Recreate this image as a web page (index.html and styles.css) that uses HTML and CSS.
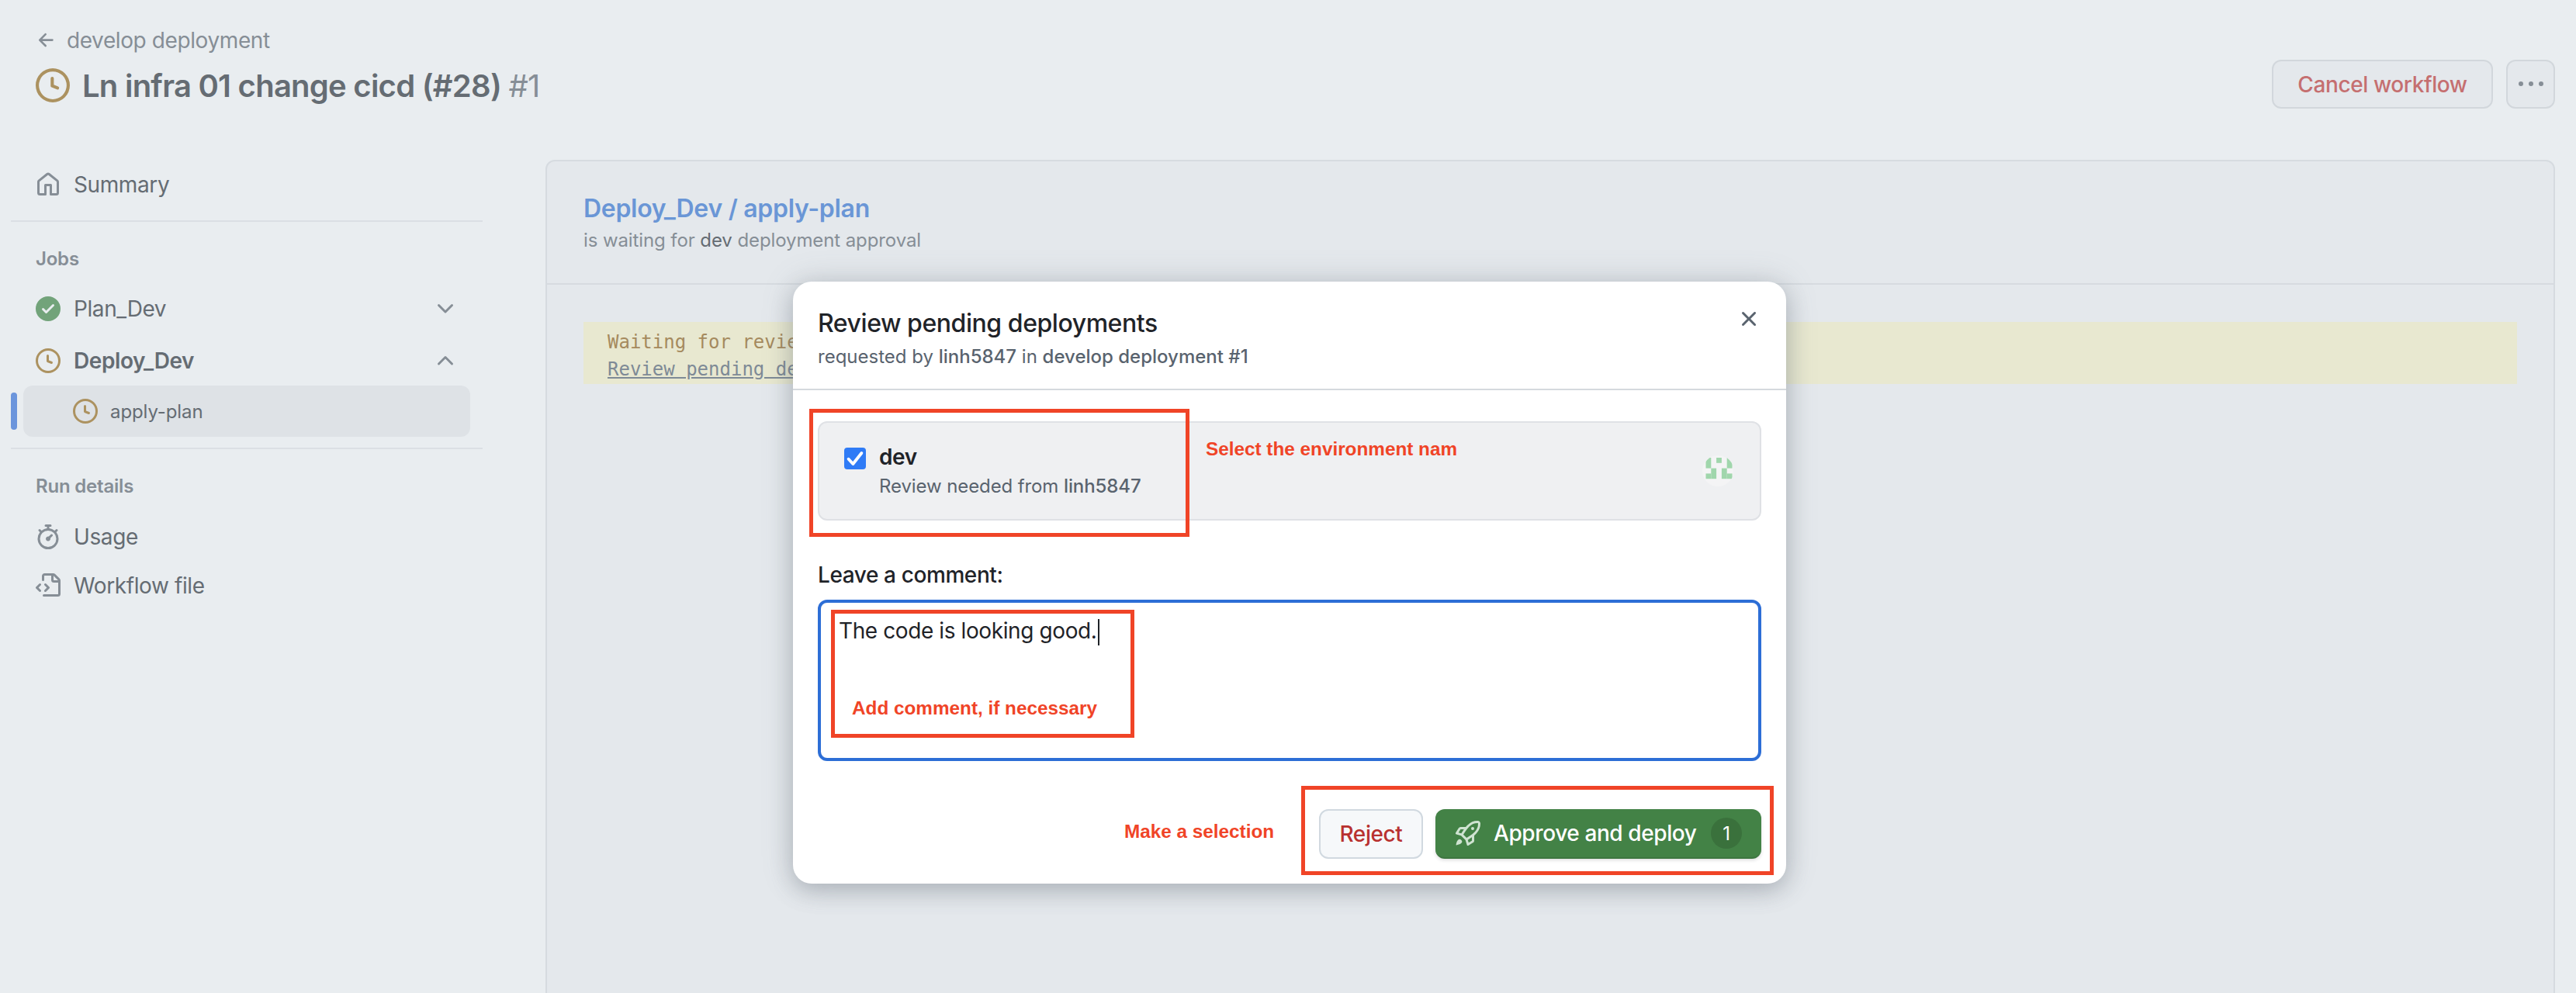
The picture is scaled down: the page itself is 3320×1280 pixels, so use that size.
FILE: index.html
```html
<!DOCTYPE html>
<html lang="en">
<head>
  <meta charset="UTF-8" />
  <title>Review pending deployments</title>
  <link rel="stylesheet" href="styles.css">
</head>
<body>
  <svg class="sprites" xmlns="http://www.w3.org/2000/svg">
    <symbol id="i-clock" viewBox="0 0 16 16"><path d="M8 0a8 8 0 1 1 0 16A8 8 0 0 1 8 0ZM1.5 8a6.5 6.5 0 1 0 13 0 6.5 6.5 0 0 0-13 0Zm7-3.25v2.992l2.028.812a.75.75 0 0 1-.557 1.392l-2.5-1A.751.751 0 0 1 7 8.25v-3.5a.75.75 0 0 1 1.5 0Z"/></symbol>
  </svg>

  <header class="top">
    <div>
      <a class="back">
        <svg class="icon-back" viewBox="0 0 16 16"><path d="M7.78 12.53a.75.75 0 0 1-1.06 0L2.47 8.28a.75.75 0 0 1 0-1.06l4.25-4.25a.751.751 0 0 1 1.042.018.751.751 0 0 1 .018 1.042L4.81 7h7.44a.75.75 0 0 1 0 1.5H4.81l2.97 2.97a.75.75 0 0 1 0 1.06Z"/></svg>
        develop deployment
      </a>
      <h1 class="title">
        <svg class="icon-title"><use href="#i-clock"/></svg>
        <span>Ln infra 01 change cicd (#28) <span class="run-no">#1</span></span>
      </h1>
    </div>
    <div class="top-actions">
      <button class="btn-cancel">Cancel workflow</button>
      <button class="btn-more">
        <svg viewBox="0 0 16 16"><path d="M8 9a1.5 1.5 0 1 0 0-3 1.5 1.5 0 0 0 0 3ZM1.5 9a1.5 1.5 0 1 0 0-3 1.5 1.5 0 0 0 0 3Zm13 0a1.5 1.5 0 1 0 0-3 1.5 1.5 0 0 0 0 3Z"/></svg>
      </button>
    </div>
  </header>

  <main class="layout">
    <nav class="side">
      <a class="side-item">
        <svg class="icon-nav" viewBox="0 0 16 16"><path d="M6.906.664a1.749 1.749 0 0 1 2.187 0l5.25 4.2c.415.332.657.835.657 1.367v7.019A1.75 1.75 0 0 1 13.25 15h-3.5a.75.75 0 0 1-.75-.75V9H7v5.25a.75.75 0 0 1-.75.75h-3.5A1.75 1.75 0 0 1 1 13.25V6.23c0-.531.242-1.034.657-1.366l5.25-4.2Zm1.25 1.171a.25.25 0 0 0-.312 0l-5.25 4.2a.25.25 0 0 0-.094.196v7.019c0 .138.112.25.25.25H5.5V8.25a.75.75 0 0 1 .75-.75h3.5a.75.75 0 0 1 .75.75v5.25h2.75a.25.25 0 0 0 .25-.25V6.23a.25.25 0 0 0-.094-.195Z"/></svg>
        Summary
      </a>
      <hr class="side-rule">
      <div class="side-head">Jobs</div>
      <a class="side-item job">
        <svg class="icon-nav icon-ok" viewBox="0 0 16 16"><path d="M8 16A8 8 0 1 1 8 0a8 8 0 0 1 0 16Zm3.78-9.72a.751.751 0 0 0-.018-1.042.751.751 0 0 0-1.042-.018L6.75 9.19 5.28 7.72a.751.751 0 0 0-1.042.018.751.751 0 0 0-.018 1.042l2 2a.75.75 0 0 0 1.06 0Z"/></svg>
        <span class="grow">Plan_Dev</span>
        <svg class="icon-chev" viewBox="0 0 16 16"><path d="M12.78 5.22a.749.749 0 0 1 0 1.06l-4.25 4.25a.749.749 0 0 1-1.06 0L3.22 6.28a.749.749 0 1 1 1.06-1.06L8 8.939l3.72-3.719a.749.749 0 0 1 1.06 0Z"/></svg>
      </a>
      <a class="side-item job job-open">
        <svg class="icon-nav icon-wait"><use href="#i-clock"/></svg>
        <span class="grow">Deploy_Dev</span>
        <svg class="icon-chev" viewBox="0 0 16 16"><path d="M3.22 10.53a.749.749 0 0 1 0-1.06l4.25-4.25a.749.749 0 0 1 1.06 0l4.25 4.25a.749.749 0 0 1-1.06 1.06L8 6.811 4.28 10.53a.749.749 0 0 1-1.06 0Z"/></svg>
      </a>
      <div class="step-row">
        <span class="step-bar"></span>
        <a class="step">
          <svg class="icon-nav icon-wait"><use href="#i-clock"/></svg>
          apply-plan
        </a>
      </div>
      <hr class="side-rule side-rule-2">
      <div class="side-head">Run details</div>
      <a class="side-item usage">
        <svg class="icon-nav" viewBox="0 0 16 16"><path d="M5.75.75A.75.75 0 0 1 6.5 0h3a.75.75 0 0 1 0 1.5h-.75v1l-.001.041a6.724 6.724 0 0 1 3.464 1.435l.007-.006.75-.75a.751.751 0 0 1 1.042.018.751.751 0 0 1 .018 1.042l-.75.75-.006.007a6.75 6.75 0 1 1-10.548 0L2.72 5.03l-.75-.75a.751.751 0 0 1 .018-1.042.751.751 0 0 1 1.042-.018l.75.75.007.006A6.72 6.72 0 0 1 7.25 2.541V1.5H6.5a.75.75 0 0 1-.75-.75ZM8 14.5a5.25 5.25 0 1 0-.001-10.501A5.25 5.25 0 0 0 8 14.5Zm.389-6.7 1.33-1.33a.75.75 0 1 1 1.061 1.06L9.45 8.861A1.503 1.503 0 0 1 8 10.75a1.499 1.499 0 1 1 .389-2.95Z"/></svg>
        Usage
      </a>
      <a class="side-item">
        <svg class="icon-nav" viewBox="0 0 16 16"><path d="M4 1.75C4 .784 4.784 0 5.75 0h5.586c.464 0 .909.184 1.237.513l2.914 2.914c.329.328.513.773.513 1.237v8.586A1.75 1.75 0 0 1 14.25 15h-9a.75.75 0 0 1 0-1.5h9a.25.25 0 0 0 .25-.25V6h-2.75A1.75 1.75 0 0 1 10 4.25V1.5H5.75a.25.25 0 0 0-.25.25v2.5a.75.75 0 0 1-1.5 0Zm1.72 4.97a.75.75 0 0 1 1.06 0l2 2a.75.75 0 0 1 0 1.06l-2 2a.749.749 0 0 1-1.275-.326.749.749 0 0 1 .215-.734l1.47-1.47-1.47-1.47a.75.75 0 0 1 0-1.06ZM3.28 7.78 1.81 9.25l1.47 1.47a.751.751 0 0 1-.018 1.042.751.751 0 0 1-1.042.018l-2-2a.75.75 0 0 1 0-1.06l2-2a.751.751 0 0 1 1.042.018.751.751 0 0 1 .018 1.042Zm8.22-6.218V4.25c0 .138.112.25.25.25h2.688l-.011-.013-2.914-2.914-.013-.011Z"/></svg>
        Workflow file
      </a>
    </nav>

    <section class="panel">
      <div class="panel-head">
        <h2 class="panel-title">Deploy_Dev / apply-plan</h2>
        <p class="panel-sub">is waiting for <span class="panel-env">dev</span> deployment approval</p>
      </div>
      <div class="panel-body">
        <div class="notice">
          <div>Waiting for revie</div>
          <div><a class="notice-link">Review pending de</a></div>
        </div>
      </div>
    </section>
  </main>

  <div class="dialog">
    <div class="dialog-head">
      <div>
        <h3 class="dialog-title">Review pending deployments</h3>
        <p class="dialog-sub">requested by <b>linh5847</b> in <b>develop deployment #1</b></p>
      </div>
      <svg class="icon-close" viewBox="0 0 16 16"><path d="M3.72 3.72a.75.75 0 0 1 1.06 0L8 6.94l3.22-3.22a.749.749 0 0 1 1.275.326.749.749 0 0 1-.215.734L9.06 8l3.22 3.22a.749.749 0 0 1-.326 1.275.749.749 0 0 1-.734-.215L8 9.06l-3.22 3.22a.751.751 0 0 1-1.042-.018.751.751 0 0 1-.018-1.042L6.94 8 3.72 4.78a.75.75 0 0 1 0-1.06Z"/></svg>
    </div>
    <div class="dialog-body">
      <div class="env-card">
        <span class="check">
          <svg viewBox="0 0 16 16"><path d="M3.2 8.4 6.5 12l6.3-8" fill="none" stroke="#fff" stroke-width="2.2" stroke-linecap="round" stroke-linejoin="round"/></svg>
        </span>
        <div class="env-text">
          <div class="env-name">dev</div>
          <div class="env-note">Review needed from <b>linh5847</b></div>
        </div>
        <svg class="avatar" viewBox="0 0 40 40">
          <defs><clipPath id="avatar-clip"><circle cx="20.5" cy="20" r="20"/></clipPath></defs>
          <circle cx="20" cy="20" r="20" fill="#f4f4f5"/>
          <g clip-path="url(#avatar-clip)" fill="#a0d6ac">
            <rect x="4.5" y="3" width="6.8" height="13.6"/>
            <rect x="18.1" y="3" width="6.8" height="6.8"/>
            <rect x="31.7" y="3" width="6.8" height="13.6"/>
            <rect x="11.3" y="16.6" width="6.8" height="13.6"/>
            <rect x="24.9" y="16.6" width="6.8" height="13.6"/>
            <rect x="4.5" y="23.4" width="6.8" height="6.8"/>
            <rect x="31.7" y="23.4" width="6.8" height="6.8"/>
          </g>
        </svg>
      </div>
      <label class="comment-label">Leave a comment:</label>
      <div class="comment-box">The code is looking good.<span class="caret"></span></div>
      <div class="dialog-foot">
        <button class="btn-reject">Reject</button>
        <button class="btn-approve">
          <svg class="icon-rocket" viewBox="0 0 16 16"><path d="M14.064 0h.186C15.216 0 16 .784 16 1.75v.186a8.752 8.752 0 0 1-2.564 6.186l-.458.459c-.314.314-.641.616-.979.904v3.207c0 .608-.315 1.172-.833 1.49l-2.774 1.707a.749.749 0 0 1-1.11-.418l-.954-3.102a1.214 1.214 0 0 1-.145-.125L3.754 9.816a1.218 1.218 0 0 1-.124-.145L.528 8.717a.749.749 0 0 1-.418-1.11l1.71-2.774A1.748 1.748 0 0 1 3.31 4h3.204c.288-.338.59-.665.904-.979l.459-.458A8.749 8.749 0 0 1 14.064 0ZM8.938 3.623h-.002l-.458.458c-.76.76-1.437 1.598-2.02 2.5l-1.5 2.317 2.143 2.143 2.317-1.5c.902-.583 1.74-1.26 2.499-2.02l.459-.458a7.25 7.25 0 0 0 2.123-5.127V1.75a.25.25 0 0 0-.25-.25h-.186a7.249 7.249 0 0 0-5.125 2.123ZM3.56 14.56c-.732.732-2.334 1.045-3.005 1.148a.234.234 0 0 1-.201-.064.234.234 0 0 1-.064-.201c.103-.671.416-2.273 1.15-3.003a1.502 1.502 0 1 1 2.12 2.12Zm6.94-3.935c-.088.06-.177.118-.266.175l-2.35 1.521.548 1.783 1.949-1.2a.25.25 0 0 0 .119-.213ZM3.678 8.116 5.2 5.766c.058-.09.117-.178.176-.266H3.309a.25.25 0 0 0-.213.119l-1.2 1.95ZM12 5a1 1 0 1 1-2 0 1 1 0 0 1 2 0Z"/></svg>
          <span>Approve and deploy</span>
          <span class="counter">1</span>
        </button>
      </div>
    </div>

    <!-- red notes drawn over the screenshot -->
    <span class="mark mark-env"></span>
    <span class="mark mark-comment"></span>
    <span class="mark mark-actions"></span>
    <span class="note note-env">Select the environment nam</span>
    <span class="note note-comment">Add comment, if necessary</span>
    <span class="note note-actions">Make a selection</span>
  </div>
</body>
</html>
```

FILE: styles.css
```css
* { box-sizing: border-box; }
html, body { height: 100%; }
body {
  margin: 0;
  position: relative;
  overflow: hidden;
  display: flex;
  flex-direction: column;
  background: #e9edf0;
  color: #656c73;
  font-family: Inter, "Noto Sans", sans-serif;
  font-size: 28px;
  letter-spacing: -0.4px;
}
svg { fill: currentColor; flex: none; }
.sprites { display: none; }
button { font-family: inherit; letter-spacing: inherit; cursor: pointer; }

.top {
  display: flex;
  justify-content: space-between;
  align-items: flex-start;
  height: 206px;
  padding: 34px 27px 0 46px;
}
.back {
  display: flex;
  align-items: center;
  gap: 12px;
  height: 36px;
  color: #868e96;
  font-size: 28px;
}
.icon-back { width: 28px; height: 28px; }
.title {
  display: flex;
  align-items: center;
  gap: 16px;
  margin: 15px 0 0;
  height: 50px;
  font-size: 40px;
  font-weight: 600;
  letter-spacing: -0.75px;
  color: #656c73;
}
.icon-title { width: 44px; height: 44px; color: #ac9260; }
.run-no { color: #868e96; font-weight: 400; }
.top-actions { display: flex; gap: 17px; margin-top: 43px; }
.btn-cancel {
  width: 285px;
  height: 63px;
  background: #e4e8ec;
  border: 2px solid #d2d7dc;
  border-radius: 12px;
  color: #c56f70;
  font-size: 28px;
  font-weight: 500;
}
.btn-more {
  display: flex;
  align-items: center;
  justify-content: center;
  width: 63px;
  height: 63px;
  padding: 0;
  background: #e4e8ec;
  border: 2px solid #d2d7dc;
  border-radius: 12px;
  color: #868e96;
}
.btn-more svg { width: 32px; height: 32px; }

.layout { flex: 1; display: flex; min-height: 0; padding-right: 27px; }
.side { width: 703px; flex: none; padding-left: 14px; }
.side-item {
  display: flex;
  align-items: center;
  gap: 17px;
  width: 608px;
  height: 32px;
  margin-left: 32px;
  color: #656c73;
}
.icon-nav { width: 32px; height: 32px; color: #868e96; }
.side-rule {
  width: 608px;
  height: 2px;
  margin: 30px 0 0;
  border: 0;
  background: #dbdfe4;
}
.side-head {
  margin: 32px 0 0 32px;
  height: 32px;
  line-height: 32px;
  color: #868e96;
  font-size: 24px;
  font-weight: 600;
  letter-spacing: -0.2px;
}
.job { width: 544px; }
.grow { flex: 1; }
.side-head + .job { margin-top: 32px; }
.job + .job { margin-top: 35px; }
.job-open { font-weight: 600; }
.icon-ok { color: #72a37a; }
.icon-wait { color: #ac9260; }
.icon-chev { width: 32px; height: 32px; color: #868e96; }
.side-item:first-child { margin-top: 16px; }
.step-row { display: flex; align-items: center; gap: 8px; margin-top: 16px; }
.step-bar { width: 8px; height: 48px; border-radius: 4px; background: #6b95dc; }
.step {
  display: flex;
  align-items: center;
  gap: 16px;
  width: 576px;
  height: 66px;
  padding-left: 64px;
  background: #dee2e6;
  border-radius: 12px;
  color: #656c73;
  font-size: 24px;
  letter-spacing: -0.1px;
}
.side-rule-2 { margin-top: 14px; }
.usage { margin-top: 33px; }
.usage + .side-item { margin-top: 31px; }

.panel {
  flex: 1;
  margin-bottom: -20px;
  background: #e4e8ec;
  border: 2px solid #d6dbe0;
  border-radius: 12px;
}
.panel-head { height: 159px; padding: 41px 47px 0; border-bottom: 2px solid #d6dbe0; }
.panel-title { margin: 0; font-size: 32px; line-height: 40px; font-weight: 600; letter-spacing: -0.3px; color: #6a96d6; }
.panel-sub { margin: 4px 0 0; font-size: 24px; line-height: 34px; letter-spacing: -0.1px; color: #868e96; }
.panel-env { color: #656c73; }
.panel-body { padding: 48px 47px 0; }
.notice {
  height: 80px;
  padding: 9px 31px;
  background: #e8e8d0;
  font-family: "DejaVu Sans Mono", monospace;
  font-size: 24px;
  line-height: 35px;
  letter-spacing: 0;
  color: #a58a5e;
  white-space: nowrap;
  overflow: hidden;
}
.notice-link { color: #7e8a96; text-decoration: underline; }

.dialog {
  position: absolute;
  left: 1022px;
  top: 363px;
  width: 1280px;
  height: 776px;
  background: #fff;
  border-radius: 24px;
  box-shadow: 0 0 40px rgba(100,110,120,.22), 0 10px 28px rgba(100,110,120,.32);
  color: #1f2328;
}
.dialog-head {
  display: flex;
  justify-content: space-between;
  height: 140px;
  padding: 32px 32px 0;
  border-bottom: 2px solid #d5d9de;
}
.dialog-title { margin: 0; font-size: 32px; line-height: 44px; font-weight: 500; letter-spacing: -0.45px; }
.dialog-sub { margin: 4px 0 0; font-size: 24px; line-height: 34px; letter-spacing: 0; color: #59636e; }
.dialog-sub b, .env-note b { font-weight: 500; }
.icon-close { width: 32px; height: 32px; color: #59636e; }
.dialog-body { padding: 40px 32px 0; }
.env-card {
  display: flex;
  align-items: center;
  height: 128px;
  padding: 0 34px 0 32px;
  background: #eff0f2;
  border: 2px solid #dfe1e5;
  border-radius: 12px;
}
.check {
  align-self: flex-start;
  display: flex;
  width: 28px;
  height: 28px;
  margin-top: 32px;
  background: #2f7bf6;
  border-radius: 4px;
}
.check svg { width: 28px; height: 28px; }
.env-text { flex: 1; margin-left: 17px; }
.env-name { font-size: 28px; line-height: 36px; font-weight: 600; }
.env-note { margin-top: 4px; font-size: 24px; line-height: 32px; letter-spacing: -0.1px; color: #59636e; }
.avatar { width: 40px; height: 40px; }
.comment-label { display: block; margin-top: 50px; font-size: 28px; line-height: 40px; font-weight: 500; }
.comment-box {
  height: 208px;
  margin-top: 12px;
  padding: 16px 23px;
  border: 4px solid #2d6ed6;
  border-radius: 12px;
  font-size: 28px;
  line-height: 40px;
  letter-spacing: -0.4px;
  color: #1f2328;
}
.caret {
  display: inline-block;
  width: 2px;
  height: 34px;
  margin-left: 2px;
  background: #1f2328;
  vertical-align: middle;
}
.dialog-foot { display: flex; justify-content: flex-end; gap: 16px; margin-top: 62px; }
.btn-reject {
  width: 134px;
  height: 64px;
  padding: 0;
  background: #f6f8fa;
  border: 2px solid #d1d9e0;
  border-radius: 12px;
  color: #b8312f;
  font-size: 28px;
  font-weight: 500;
}
.btn-approve {
  display: flex;
  align-items: center;
  width: 420px;
  height: 64px;
  padding: 0 25px 0 26px;
  background: #438246;
  border: 0;
  border-bottom: 2px solid #3d7640;
  border-radius: 12px;
  box-shadow: 0 2px 4px rgba(31,35,40,.15);
  color: #fff;
  font-size: 28px;
  font-weight: 500;
}
.icon-rocket { width: 32px; height: 32px; color: #cfe3d1; margin-right: 17px; }
.counter {
  display: flex;
  align-items: center;
  justify-content: center;
  width: 40px;
  height: 40px;
  margin-left: auto;
  border-radius: 50%;
  background: #3a713c;
  font-size: 24px;
  font-weight: 400;
}

.mark { position: absolute; border: 5px solid #f04427; pointer-events: none; }
.mark-env { left: 21px; top: 164px; width: 490px; height: 165px; }
.mark-comment { left: 49px; top: 423px; width: 391px; height: 165px; }
.mark-actions { left: 655px; top: 650px; width: 609px; height: 115px; }
.note {
  position: absolute;
  font-family: "Liberation Sans", Arial, sans-serif;
  font-size: 24.3px;
  font-weight: 700;
  line-height: 30px;
  letter-spacing: 0;
  color: #f04427;
  white-space: nowrap;
}
.note-env { left: 532px; top: 201px; }
.note-comment { left: 76px; top: 535px; }
.note-actions { left: 427px; top: 694px; }
```
